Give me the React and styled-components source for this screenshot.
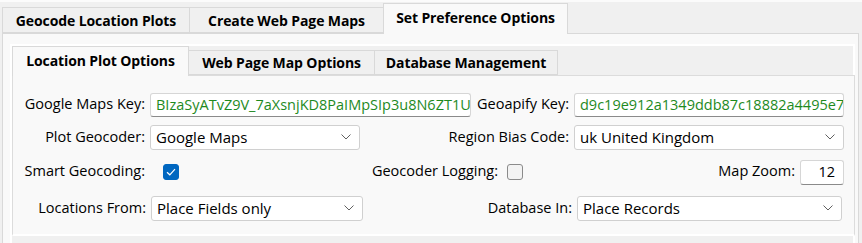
import styled, { createGlobalStyle } from 'styled-components';

const GlobalStyle = createGlobalStyle`
    html, body {
        margin: 0;
        padding: 0;
        background: #f0f0f0;
        font-family: "Open Sans", "Noto Sans", sans-serif;
        color: #000;
    }
`;

const Page = styled.div`
    width: 862px;
    height: 243px;
    overflow: hidden;
    background: #f0f0f0;
    border-top: 2px solid #fbfbfb;
    box-sizing: border-box;
    padding: 1px 0 0 2px;
`;

const TabStrip = styled.div`
    display: flex;
    align-items: flex-end;
    height: ${p => p.$height}px;
    padding-left: ${p => p.$indent || 0}px;
    position: relative;
    z-index: 1;
`;

const Tab = styled.div`
    box-sizing: border-box;
    height: ${p => (p.$active ? p.$height + 1 : p.$height - 4)}px;
    width: ${p => p.$width}px;
    display: flex;
    align-items: center;
    justify-content: center;
    padding-bottom: ${p => (p.$active ? 3 : 0)}px;
    font-weight: 700;
    font-size: 14px;
    letter-spacing: -0.1px;
    background: ${p => (p.$active ? '#f9f9f9' : '#f0f0f0')};
    border: 1px solid #d9d9d9;
    border-bottom: ${p => (p.$active ? 'none' : '1px solid #d9d9d9')};
    margin-left: -1px;
    margin-bottom: ${p => (p.$active ? -1 : 0)}px;
    white-space: nowrap;
`;

const Panel = styled.div`
    box-sizing: border-box;
    width: 857px;
    height: 220px;
    background: #f9f9f9;
    border: 1px solid #d9d9d9;
    padding: 10px 3px 0 7px;
`;

const InnerFrame = styled.div`
    border-top: 2px solid #ffffff;
    border-left: 2px solid #ffffff;
    border-right: 2px solid #ffffff;
    background: #f0f0f0;
    height: 202px;
    box-sizing: border-box;
`;

const InnerPanel = styled.div`
    box-sizing: border-box;
    width: 843px;
    height: 161px;
    background: #f9f9f9;
    border: 1px solid #dcdcdc;
    border-bottom: 2px solid #ffffff;
    padding: 17px 0 0 0;
    display: flex;
    flex-direction: column;
`;

const Row = styled.div`
    display: flex;
    align-items: center;
    height: ${p => p.$height}px;
    margin-bottom: ${p => p.$gap || 0}px;
`;

const Label = styled.div`
    width: ${p => p.$width}px;
    flex: ${p => (p.$grow ? 1 : 'none')};
    text-align: right;
    font-size: 14.5px;
    white-space: nowrap;
    padding-right: 5px;
    box-sizing: border-box;
    margin-top: -3px;
`;

const TextBox = styled.div`
    box-sizing: border-box;
    width: ${p => p.$width}px;
    height: ${p => p.$height || 24}px;
    background: #fff;
    border: 1px solid #d6d6d6;
    border-bottom-color: #8a8a8a;
    border-radius: 3px;
    display: flex;
    align-items: center;
    justify-content: ${p => (p.$right ? 'flex-end' : 'flex-start')};
    padding: 0 ${p => (p.$right ? 8 : 5)}px 1px;
    font-size: 14.5px;
    color: ${p => p.$color || '#000'};
    overflow: hidden;
    white-space: nowrap;
`;

const SelectBox = styled.div`
    box-sizing: border-box;
    width: ${p => p.$width}px;
    height: 25px;
    background: #fff;
    border: 1px solid #d0d0d0;
    border-radius: 3px;
    display: flex;
    align-items: center;
    justify-content: space-between;
    padding: 0 8px 1px 5px;
    font-size: 15px;
    white-space: nowrap;
`;

const Check = styled.div`
    box-sizing: border-box;
    width: 16px;
    height: 16px;
    border-radius: 3px;
    margin-left: ${p => p.$offset}px;
    background: ${p => (p.$on ? '#0067c0' : '#f3f3f3')};
    border: 1px solid ${p => (p.$on ? '#0067c0' : '#8b8b8b')};
    display: flex;
    align-items: center;
    justify-content: center;
`;

const Spacer = styled.div`
    width: ${p => p.$width}px;
    flex: ${p => (p.$grow ? 1 : 'none')};
`;

const Chevron = () => (
    <svg width="10" height="6" viewBox="0 0 10 6">
        <path d="M0.5 0.5 L5 5 L9.5 0.5" fill="none" stroke="#606060" strokeWidth="1" />
    </svg>
);

const Tick = () => (
    <svg width="10" height="8" viewBox="0 0 10 8">
        <path d="M1 4.2 L3.8 6.8 L9 1.2" fill="none" stroke="#fff" strokeWidth="1.2" />
    </svg>
);

const outerTabs = [
    { title: 'Geocode Location Plots', width: 188 },
    { title: 'Create Web Page Maps', width: 195 },
    { title: 'Set Preference Options', width: 185, active: true },
];

const innerTabs = [
    { title: 'Location Plot Options', width: 177, active: true },
    { title: 'Web Page Map Options', width: 187 },
    { title: 'Database Management', width: 184 },
];

const App = () => {
    return (
        <>
            <GlobalStyle />
            <Page>
                <TabStrip $height={30} $indent={1}>
                    {outerTabs.map(t => (
                        <Tab key={t.title} $width={t.width} $height={30} $active={t.active}>
                            {t.title}
                        </Tab>
                    ))}
                </TabStrip>
                <Panel>
                    <InnerFrame>
                        <TabStrip $height={29} $indent={1}>
                            {innerTabs.map(t => (
                                <Tab key={t.title} $width={t.width} $height={29} $active={t.active}>
                                    {t.title}
                                </Tab>
                            ))}
                        </TabStrip>
                        <InnerPanel>
                            <Row $height={24} $gap={8}>
                                <Label $width={137}>Google Maps Key:</Label>
                                <TextBox $width={321} $color="#1e8a1e">
                                    BIzaSyATvZ9V_7aXsnjKD8PaIMpSIp3u8N6ZT1U
                                </TextBox>
                                <Label $grow>Geoapify Key:</Label>
                                <TextBox $width={270} $color="#1e8a1e">
                                    d9c19e912a1349ddb87c18882a4495e7
                                </TextBox>
                                <Spacer $width={10} />
                            </Row>
                            <Row $height={25} $gap={9}>
                                <Label $width={137}>Plot Geocoder:</Label>
                                <SelectBox $width={210}>
                                    Google Maps
                                    <Chevron />
                                </SelectBox>
                                <Label $grow>Region Bias Code:</Label>
                                <SelectBox $width={270}>
                                    uk United Kingdom
                                    <Chevron />
                                </SelectBox>
                                <Spacer $width={10} />
                            </Row>
                            <Row $height={26} $gap={11}>
                                <Label $width={137}>Smart Geocoding:</Label>
                                <Check $on $offset={13}>
                                    <Tick />
                                </Check>
                                <Spacer $width={186} />
                                <Label $width={138}>Geocoder Logging:</Label>
                                <Check $offset={4} />
                                <Label $grow>Map Zoom:</Label>
                                <TextBox $width={44} $height={25} $right>
                                    12
                                </TextBox>
                                <Spacer $width={10} />
                            </Row>
                            <Row $height={25}>
                                <Label $width={138}>Locations From:</Label>
                                <SelectBox $width={212}>
                                    Place Fields only
                                    <Chevron />
                                </SelectBox>
                                <Label $grow>Database In:</Label>
                                <SelectBox $width={265}>
                                    Place Records
                                    <Chevron />
                                </SelectBox>
                                <Spacer $width={12} />
                            </Row>
                        </InnerPanel>
                    </InnerFrame>
                </Panel>
            </Page>
        </>
    );
};

export default App;
